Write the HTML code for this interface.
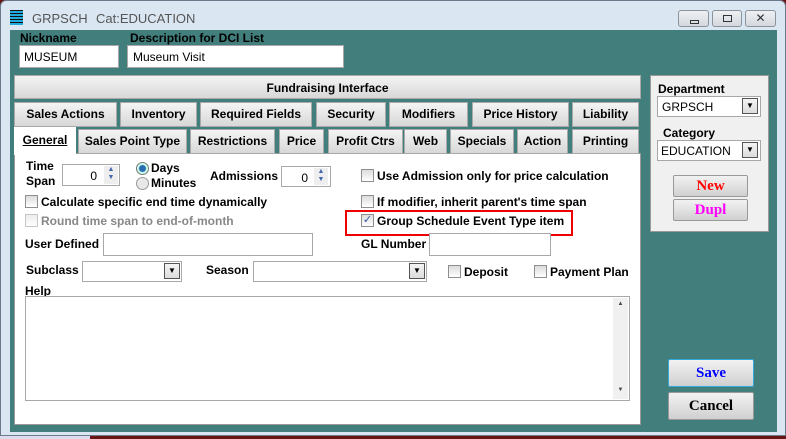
<!DOCTYPE html>
<html><head><style>
*{box-sizing:border-box;margin:0;padding:0}
body{width:786px;height:439px;overflow:hidden;background:#6a1515;font-family:"Liberation Sans",Arial,sans-serif;font-size:12px;position:relative}
.a{position:absolute}
.b{font-weight:bold}
.frame{left:0;top:0;width:786px;height:436px;background:#dae6f2;border:1px solid #6b7a8a;border-radius:6px 6px 0 0}
.teal{left:10px;top:30px;width:767px;height:402px;background:#417e7c}
.inp{background:#fff;border:1px solid #a8a8a8}
.tab{background:linear-gradient(#f4f4f4,#d8d8d8);border:1px solid #a9a9a9;font-weight:bold;text-align:center;line-height:22px;font-size:12px}
.wb{background:linear-gradient(#eef0f3,#d4d8de);border:1px solid #8a929c;border-radius:3px}
.cb{width:13px;height:13px;border:1px solid #8e8f8f;background:linear-gradient(#dcdcdc,#fff)}
.dd{width:16px;height:16px;border:1px solid #555;background:linear-gradient(#f4f4f4,#dcdcdc);font-size:8px;text-align:center;line-height:14px}
.btn{background:linear-gradient(#f2f2f2,#d0d0d0);border:1px solid #999;border-radius:2px;font-family:"Liberation Serif",serif;font-weight:bold;text-align:center}
</style></head><body>
<div class="a frame"></div>
<div class="a" style="left:10px;top:10px;width:13px;height:15px;background:repeating-linear-gradient(#111 0 1px,#2ad 1px 3px)"></div>
<div class="a" style="left:32px;top:11px;color:#555;font-size:13px">GRPSCH</div>
<div class="a" style="left:96px;top:11px;color:#555;font-size:13px">Cat:EDUCATION</div>
<div class="a wb" style="left:678px;top:10px;width:31px;height:17px"><div class="a" style="left:11px;top:9px;width:9px;height:4px;border:1px solid #333"></div></div>
<div class="a wb" style="left:712px;top:10px;width:30px;height:17px"><div class="a" style="left:10px;top:4px;width:9px;height:7px;border:1px solid #333"></div></div>
<div class="a wb" style="left:745px;top:10px;width:31px;height:17px;text-align:center;font-size:12px;line-height:15px;color:#333">✕</div>
<div class="a teal"></div>
<div class="a b" style="left:20px;top:31px">Nickname</div>
<div class="a b" style="left:130px;top:31px">Description for DCI List</div>
<div class="a inp" style="left:19px;top:45px;width:100px;height:23px;padding:4px 4px;font-size:12px">MUSEUM</div>
<div class="a inp" style="left:127px;top:45px;width:217px;height:23px;padding:4px 5px;font-size:12px">Museum Visit</div>
<div class="a tab" style="left:14px;top:75px;width:627px;height:24px;line-height:24px">Fundraising Interface</div>
<div class="a tab" style="left:14px;top:102px;width:103px;height:25px">Sales Actions</div>
<div class="a tab" style="left:120px;top:102px;width:77px;height:25px">Inventory</div>
<div class="a tab" style="left:200px;top:102px;width:112px;height:25px">Required Fields</div>
<div class="a tab" style="left:316px;top:102px;width:70px;height:25px">Security</div>
<div class="a tab" style="left:389px;top:102px;width:79px;height:25px">Modifiers</div>
<div class="a tab" style="left:472px;top:102px;width:97px;height:25px">Price History</div>
<div class="a tab" style="left:572px;top:102px;width:67px;height:25px">Liability</div>
<div class="a" style="left:14px;top:153px;width:627px;height:272px;background:#fff;border:1px solid #999"></div>
<div class="a" style="left:14px;top:127px;width:62px;height:28px;background:#fff;text-align:center;line-height:26px;font-weight:bold;text-decoration:underline">General</div>
<div class="a tab" style="left:78px;top:129px;width:109px;height:25px">Sales Point Type</div>
<div class="a tab" style="left:190px;top:129px;width:85px;height:25px">Restrictions</div>
<div class="a tab" style="left:279px;top:129px;width:45px;height:25px">Price</div>
<div class="a tab" style="left:328px;top:129px;width:75px;height:25px">Profit Ctrs</div>
<div class="a tab" style="left:404px;top:129px;width:43px;height:25px">Web</div>
<div class="a tab" style="left:450px;top:129px;width:64px;height:25px">Specials</div>
<div class="a tab" style="left:517px;top:129px;width:51px;height:25px">Action</div>
<div class="a tab" style="left:572px;top:129px;width:67px;height:25px">Printing</div>

<div class="a b" style="left:26px;top:159px;line-height:15px">Time<br>Span</div>
<div class="a inp" style="left:62px;top:164px;width:58px;height:22px;text-align:right;padding:4px 22px 0 0">0</div>
<div class="a" style="left:104px;top:166px;width:14px;height:18px;font-size:7px;color:#46a;line-height:8px;text-align:center;background:#eee">▲<br>▼</div>
<div class="a" style="left:136px;top:162px;width:13px;height:13px;border-radius:50%;border:1px solid #777;background:radial-gradient(#2a6ab0 0 3px,#cfe 4px)"></div>
<div class="a b" style="left:151px;top:161px">Days</div>
<div class="a" style="left:136px;top:177px;width:13px;height:13px;border-radius:50%;border:1px solid #999;background:#e8e8e8"></div>
<div class="a b" style="left:151px;top:176px">Minutes</div>
<div class="a b" style="left:210px;top:169px">Admissions</div>
<div class="a inp" style="left:281px;top:166px;width:50px;height:21px;text-align:right;padding:4px 22px 0 0">0</div>
<div class="a" style="left:314px;top:168px;width:14px;height:17px;font-size:7px;color:#46a;line-height:8px;text-align:center;background:#eee">▲<br>▼</div>
<div class="a cb" style="left:25px;top:195px"></div><div class="a b" style="left:41px;top:195px">Calculate specific end time dynamically</div>
<div class="a cb" style="left:25px;top:214px;opacity:.5"></div><div class="a b" style="left:41px;top:214px;color:#888">Round time span to end-of-month</div>
<div class="a cb" style="left:361px;top:169px"></div><div class="a b" style="left:377px;top:169px">Use Admission only for price calculation</div>
<div class="a cb" style="left:361px;top:195px"></div><div class="a b" style="left:377px;top:195px">If modifier, inherit parent's time span</div>
<div class="a" style="left:345px;top:210px;width:228px;height:26px;border:2px solid #e00"></div>
<div class="a cb" style="left:361px;top:214px;color:#35a;font-size:11px;line-height:11px;text-align:center">✓</div><div class="a b" style="left:377px;top:214px">Group Schedule Event Type item</div>
<div class="a b" style="left:25px;top:237px">User Defined</div>
<div class="a inp" style="left:103px;top:233px;width:210px;height:23px"></div>
<div class="a b" style="left:361px;top:237px">GL Number</div>
<div class="a inp" style="left:429px;top:233px;width:122px;height:23px"></div>
<div class="a b" style="left:26px;top:263px">Subclass</div>
<div class="a inp" style="left:82px;top:261px;width:100px;height:21px"></div>
<div class="a dd" style="left:164px;top:263px">▼</div>
<div class="a b" style="left:206px;top:263px">Season</div>
<div class="a inp" style="left:253px;top:261px;width:174px;height:21px"></div>
<div class="a dd" style="left:409px;top:263px">▼</div>
<div class="a cb" style="left:448px;top:265px"></div><div class="a b" style="left:464px;top:265px">Deposit</div>
<div class="a cb" style="left:534px;top:265px"></div><div class="a b" style="left:550px;top:265px">Payment Plan</div>
<div class="a b" style="left:25px;top:284px">Help</div>
<div class="a inp" style="left:25px;top:296px;width:605px;height:105px"></div>
<div class="a" style="left:613px;top:298px;width:15px;height:101px;background:#f0f0f0;font-size:6px;color:#444;text-align:center"><div style="margin-top:3px">▲</div><div style="margin-top:80px">▼</div></div>

<div class="a" style="left:650px;top:75px;width:119px;height:157px;background:#f0f0f0;border:1px solid #999"></div>
<div class="a b" style="left:658px;top:82px">Department</div>
<div class="a inp" style="left:657px;top:96px;width:104px;height:21px;padding:3px 4px">GRPSCH</div>
<div class="a dd" style="left:742px;top:98px">▼</div>
<div class="a b" style="left:663px;top:126px">Category</div>
<div class="a inp" style="left:657px;top:140px;width:104px;height:21px;padding:3px 3px">EDUCATION</div>
<div class="a dd" style="left:742px;top:142px">▼</div>
<div class="a btn" style="left:673px;top:175px;width:75px;height:22px;color:#f00;font-size:15px;line-height:20px">New</div>
<div class="a btn" style="left:673px;top:199px;width:75px;height:22px;color:#f0f;font-size:15px;line-height:20px">Dupl</div>
<div class="a btn" style="left:668px;top:359px;width:86px;height:28px;color:#00f;font-size:15px;line-height:26px;border-color:#3ad">Save</div>
<div class="a btn" style="left:668px;top:392px;width:86px;height:28px;color:#000;font-size:15px;line-height:26px">Cancel</div>
<div class="a" style="left:0;top:436px;width:90px;height:3px;background:#dde"></div>
</body></html>
